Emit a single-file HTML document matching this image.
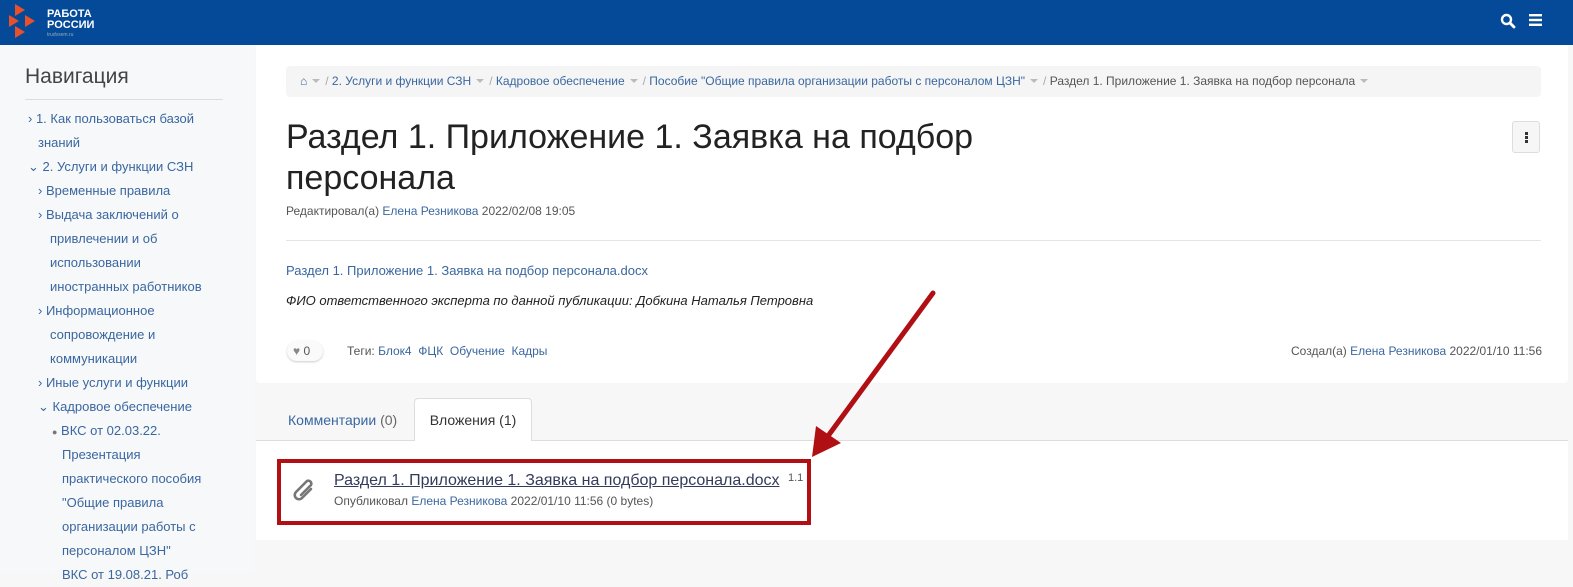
<!DOCTYPE html>
<html><head><meta charset="utf-8"><style>
*{margin:0;padding:0;box-sizing:border-box}
body{width:1573px;height:574px;overflow:hidden;background:#f7f7f7;font-family:"Liberation Sans","Noto Sans CJK SC",sans-serif;font-size:13px;color:#333;position:relative}
a{color:#3a67a0;text-decoration:none}
.abs{position:absolute}
.hdr{left:0;top:0;width:1573px;height:45px;background:#044a98}
.nav{left:0;top:45px;width:255px;height:529px;background:#f7f8f9}
.navt{left:25px;top:65px;font-size:21px;color:#444}
.navl{left:25px;top:99px;width:198px;border-top:1px solid #ddd}
.nl{position:absolute;font-size:13px;line-height:24px;color:#3a67a0}
.card{left:256px;top:45px;width:1312px;height:338px;background:#fff;border-radius:0 0 4px 4px}
.bc{left:286px;top:66px;width:1255px;height:31px;background:#f5f5f5;border-radius:4px;padding:8px 14px;font-size:12px;color:#aaa;white-space:nowrap}
.bc a{color:#3a67a0}
.caret{display:inline-block;width:0;height:0;border-left:4px solid transparent;border-right:4px solid transparent;border-top:4px solid #bbb;margin:0 5px 2px 5px}
h1{position:absolute;left:286px;top:117px;font-size:34px;font-weight:normal;line-height:41px;color:#222}
.sm{font-size:12px;color:#555}
.tab2{left:414px;top:398px;width:118px;height:43px;background:#fff;border:1px solid #ddd;border-bottom:none;border-radius:4px 4px 0 0;font-size:14px;color:#333;padding-top:13px;text-align:center}
.card2{left:256px;top:440px;width:1312px;height:100px;background:#fff;border-top:1px solid #ddd}
</style></head><body>
<div class="abs hdr"></div>
<svg class="abs" style="left:9px;top:4px" width="32" height="35" viewBox="0 0 32 35"><polygon points="6,0 16,6 6,12" fill="#e8502b"/><polygon points="0,11 10,17 0,23" fill="#e8502b"/><polygon points="16,11 26,17 16,23" fill="#e8502b"/><polygon points="6,22 16,28 6,34" fill="#e8502b"/></svg>
<div class="abs" style="left:47px;top:9px;color:#fff;font-weight:bold;font-size:11px;line-height:11px">РАБОТА<br>РОССИИ</div>
<div class="abs" style="left:47px;top:32px;color:#9ab;font-size:5px">trudvsem.ru</div>
<svg class="abs" style="left:1500px;top:13px" width="16" height="16" viewBox="0 0 16 16"><circle cx="6.5" cy="6.5" r="4.5" fill="none" stroke="#fff" stroke-width="2.4"/><line x1="10" y1="10" x2="14" y2="14" stroke="#fff" stroke-width="2.8" stroke-linecap="round"/></svg>
<svg class="abs" style="left:1529px;top:14px" width="13" height="12"><rect y="0" width="13" height="2.4" fill="#fff"/><rect y="4.8" width="13" height="2.4" fill="#fff"/><rect y="9.6" width="13" height="2.4" fill="#fff"/></svg>

<div class="abs nav"></div>
<div class="abs navt">Навигация</div>
<div class="abs navl"></div>
<div class="nl" style="left:28px;top:107px">› 1. Как пользоваться базой</div>
<div class="nl" style="left:38px;top:131px">знаний</div>
<div class="nl" style="left:28px;top:155px">⌄ 2. Услуги и функции СЗН</div>
<div class="nl" style="left:38px;top:179px">› Временные правила</div>
<div class="nl" style="left:38px;top:203px">› Выдача заключений о</div>
<div class="nl" style="left:50px;top:227px">привлечении и об</div>
<div class="nl" style="left:50px;top:251px">использовании</div>
<div class="nl" style="left:50px;top:275px">иностранных работников</div>
<div class="nl" style="left:38px;top:299px">› Информационное</div>
<div class="nl" style="left:50px;top:323px">сопровождение и</div>
<div class="nl" style="left:50px;top:347px">коммуникации</div>
<div class="nl" style="left:38px;top:371px">› Иные услуги и функции</div>
<div class="nl" style="left:38px;top:395px">⌄ Кадровое обеспечение</div>
<div class="nl" style="left:52px;top:419px"><span style="color:#777;font-size:9px">●</span> ВКС от 02.03.22.</div>
<div class="nl" style="left:62px;top:443px">Презентация</div>
<div class="nl" style="left:62px;top:467px">практического пособия</div>
<div class="nl" style="left:62px;top:491px">"Общие правила</div>
<div class="nl" style="left:62px;top:515px">организации работы с</div>
<div class="nl" style="left:62px;top:539px">персоналом ЦЗН"</div>
<div class="nl" style="left:62px;top:563px">ВКС от 19.08.21. Роб</div>

<div class="abs card"></div>
<div class="abs bc"><a>&#8962;</a><span class="caret"></span>/ <a>2. Услуги и функции СЗН</a><span class="caret"></span>/ <a>Кадровое обеспечение</a><span class="caret"></span>/ <a>Пособие "Общие правила организации работы с персоналом ЦЗН"</a><span class="caret"></span>/ <span style="color:#555">Раздел 1. Приложение 1. Заявка на подбор персонала</span><span class="caret"></span></div>
<h1>Раздел 1. Приложение 1. Заявка на подбор<br>персонала</h1>
<div class="abs" style="left:1512px;top:121px;width:28px;height:32px;border:1px solid #ddd;border-radius:3px;background:#f6f6f6"><div style="position:absolute;left:12px;top:10px;width:3px;height:3px;background:#333;box-shadow:0 4px #333,0 8px #333"></div></div>
<div class="abs sm" style="left:286px;top:204px">Редактировал(а) <a>Елена Резникова</a> 2022/02/08 19:05</div>
<div class="abs" style="left:286px;top:240px;width:1255px;border-top:1px solid #e5e5e5"></div>
<div class="abs" style="left:286px;top:263px;font-size:13px"><a>Раздел 1. Приложение 1. Заявка на подбор персонала.docx</a></div>
<div class="abs" style="left:286px;top:293px;font-size:13px;font-style:italic;color:#222">ФИО ответственного эксперта по данной публикации: Добкина Наталья Петровна</div>
<div class="abs" style="left:287px;top:341px;width:36px;height:20px;border-radius:10px;background:#fafafa;box-shadow:0 1px 2px #ccc;font-size:12px;color:#555;padding:3px 0 0 6px"><span style="color:#888">♥</span> 0</div>
<div class="abs sm" style="left:347px;top:344px">Теги: <a>Блок4</a>&nbsp; <a>ФЦК</a>&nbsp; <a>Обучение</a>&nbsp; <a>Кадры</a></div>
<div class="abs sm" style="left:1291px;top:344px">Создал(а) <a>Елена Резникова</a> 2022/01/10 11:56</div>

<div class="abs" style="left:288px;top:412px;font-size:14px;color:#3a67a0">Комментарии <span style="color:#666">(0)</span></div>
<div class="abs card2"></div>
<div class="abs tab2">Вложения (1)</div>

<div class="abs" style="left:277px;top:459px;width:534px;height:66px;border:4px solid #b00f14"></div>
<svg class="abs" style="left:291px;top:475px" width="30" height="32" viewBox="0 0 30 32"><path d="M20 14 L11 23 a4 4 0 0 1 -6 -6 L16 6 a3 3 0 0 1 4 4 L10 20" fill="none" stroke="#777" stroke-width="2.6" stroke-linecap="round"/></svg>
<div class="abs" style="left:334px;top:472px;font-size:16px"><a style="color:#333b5a;text-decoration:underline">Раздел 1. Приложение 1. Заявка на подбор персонала.docx</a></div>
<div class="abs" style="left:788px;top:472px;font-size:11px;color:#555">1.1</div>
<div class="abs sm" style="left:334px;top:494px">Опубликовал <a>Елена Резникова</a> 2022/01/10 11:56 (0 bytes)</div>

<svg class="abs" style="left:0;top:0" width="1573" height="574"><line x1="933" y1="293" x2="828" y2="436" stroke="#b00f14" stroke-width="5" stroke-linecap="round"/><polygon points="812,457 816,426 841,443" fill="#b00f14"/></svg>
</body></html>
